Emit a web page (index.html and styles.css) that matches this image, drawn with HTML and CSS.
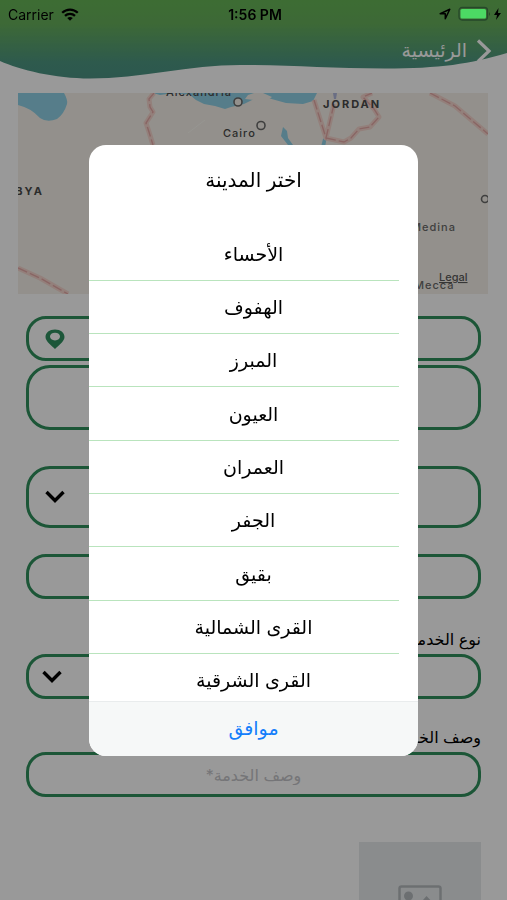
FILE: index.html
```html
<!DOCTYPE html>
<html lang="ar" dir="rtl">
<head>
<meta charset="utf-8">
<meta name="viewport" content="width=device-width, initial-scale=1">
<title>اختر المدينة</title>
<link rel="stylesheet" href="styles.css">
</head>
<body>
<div class="status" dir="ltr">
  <div class="status-side">
    <span>Carrier</span>
    <svg class="wifi" viewBox="0 0 18 13" width="18" height="13" aria-hidden="true">
      <g fill="none" stroke="#000" stroke-width="2.3"><path d="M1.2 4.8C5.6.5 12.4.5 16.800 4.800"/><path d="M4 7.900C6.800 5.200 11.200 5.200 14 7.900"/></g>
      <path d="M9 12.800L6.200 10Q9 7.800 11.800 10Z"/>
    </svg>
  </div>
  <span class="time">1:56 PM</span>
  <div class="status-side status-end">
    <svg viewBox="0 0 12 12" width="12" height="12" aria-hidden="true"><path d="M1.200 5.700L10.800 1.200L6.300 10.800V5.700Z" fill="none" stroke="#000" stroke-width="1.500" stroke-linejoin="round"/></svg>
    <svg viewBox="0 0 44 16" width="44" height="16" aria-hidden="true">
      <rect x="1" y="1.500" width="28.500" height="12.500" rx="3" fill="none" stroke="#26472a" stroke-width="1.300"/>
      <rect x="2.500" y="3" width="25.500" height="9.500" rx="1.500" fill="#4cd964"/>
      <path d="M31 6Q33 8 31 10Z" fill="#26472a"/>
      <path d="M40.500 2L36 9H39L38 14L43 7H40Z"/>
    </svg>
  </div>
</div>

<div class="app">
  <header class="top">
    <svg class="wave" viewBox="0 0 507 80" preserveAspectRatio="none" aria-hidden="true">
      <defs><linearGradient id="g" x1="0" y1="0" x2="0" y2="1"><stop offset="0" stop-color="#67b556"/><stop offset=".3" stop-color="#66af5b"/><stop offset=".8" stop-color="#4d9681"/><stop offset="1" stop-color="#4b9283"/></linearGradient></defs>
      <path fill="url(#g)" d="M0 0H507V53C470 64 440 68.500 385 68.500C330 68.500 290 65 240 65C190 65 140 78.500 90 78.500C55 78.500 20 70 0 61Z"/>
    </svg>
    <a class="back" href="#">
      <svg viewBox="0 0 16 24" width="16" height="24" aria-hidden="true"><path d="M2 1.500L13 12L2 22.500" fill="none" stroke="#fff" stroke-width="3.200"/></svg>
      <span>الرئيسية</span>
    </a>
  </header>

  <svg class="map" viewBox="18 93 470 201" preserveAspectRatio="xMidYMid slice" direction="ltr" role="img" aria-label="Map">
    <rect x="18" y="93" width="470" height="201" fill="#f5f1e9"/>
    <g fill="#8fd0e6">
      <path d="M18 93H64Q68 100 67 104Q64 114 57 119Q47 123 40 118Q31 108 18 105Z"/>
      <path d="M153 93H317L313 101L303 104L286 103L268 98L254 99L244 104L231 107L225 109L215 106L204 104L196 100L190 95L175 93L160 95Z"/>
      <path d="M283 127L287 131L288 138L293 145H288L281 136Z"/>
      <path d="M323 139L327 136L325 147H321Z"/>
      <path d="M333 93H337L336 99H334Z" fill="#b1b8dd"/>
    </g>
    <path d="M245 99L248 95L254 93H263L272 97L268 100L254 100Z" fill="#f5f1e9"/>
    <path d="M188 133L205 120" stroke="#fbf9f3" stroke-width="1"/>
    <path fill="none" stroke="#f6d5ce" stroke-width="5" stroke-linejoin="round" d="M154 93L149 99L150 107L153 112L146 123L149 132L153 145M314 100L326 138L334 104M326 138L344 142L351 138L359 129L370 127L379 117L374 109L363 97L372 93M430 93L455 106L488 134M18 268L40 278L68 294"/>
    <path fill="none" stroke="#e5a9a6" stroke-width="1.400" stroke-dasharray="10 3" d="M154 93L149 99L150 107L153 112L146 123L149 132L153 145M314 100L326 138L334 104M326 138L344 142L351 138L359 129L370 127L379 117L374 109L363 97L372 93M430 93L455 106L488 134M18 268L40 278L68 294"/>
    <g fill="#f5f1e9" stroke="#6a6a6a" stroke-width="1.600"><circle cx="238" cy="102" r="4"/><circle cx="261" cy="125.500" r="4"/><circle cx="485" cy="199" r="3.500"/></g>
    <g class="places">
      <text x="166" y="96">Alexandria</text>
      <text x="223" y="137">Cairo</text>
      <text x="323" y="108" class="country">JORDAN</text>
      <text x="2" y="195" class="country">LIBYA</text>
      <text x="411" y="231" class="light">Medina</text>
      <text x="414" y="289" class="light">Mecca</text>
      <text x="439" y="281" class="legal">Legal</text>
    </g>
  </svg>

  <form class="form">
    <div class="field">
      <input type="text" aria-label="الموقع">
      <svg class="icon" viewBox="0 0 20 20" width="20" height="20" aria-hidden="true"><path fill="#2f8f60" fill-rule="evenodd" d="M10 .5C4.500.5.5 3.500.5 8C.5 12.500 7 17 10 20C13 17 19.500 12.500 19.500 8C19.500 3.500 15.500.5 10 .5ZM10 3.800C13 3.800 15 5.500 15 7.600S13 11.400 10 11.400S5 9.700 5 7.600S7 3.800 10 3.800Z"/></svg>
    </div>
    <textarea class="address" aria-label="العنوان"></textarea>
    <div class="field tall">
      <select aria-label="المدينة"><option></option></select>
      <svg class="icon" viewBox="0 0 20 14" width="20" height="14" aria-hidden="true"><path d="M1.500 2L10 10.500L18.500 2" fill="none" stroke="#000" stroke-width="3.400"/></svg>
    </div>
    <div class="field single"><input type="text" aria-label="الحي"></div>
    <label for="kind">نوع الخدمة</label>
    <div class="field">
      <select id="kind"><option></option></select>
      <svg class="icon near" viewBox="0 0 20 14" width="20" height="14" aria-hidden="true"><path d="M1.500 2L10 10.500L18.500 2" fill="none" stroke="#000" stroke-width="3.400"/></svg>
    </div>
    <label for="desc">وصف الخدمة</label>
    <div class="field"><input id="desc" type="text" placeholder="وصف الخدمة*"></div>
    <button type="button" class="photo" aria-label="صورة">
      <svg viewBox="0 0 44 36" width="44" height="36" aria-hidden="true"><rect x="1.500" y="1.500" width="41" height="33" rx="2" fill="none" stroke="#b5babd" stroke-width="2.500"/><circle cx="10.500" cy="11" r="4.500" fill="#b5babd"/><path d="M5 31V26L13 19L18 23L28.500 11L39 22V31Z" fill="#b5babd"/></svg>
    </button>
  </form>
</div>

<div class="overlay">
  <section class="dialog" role="dialog" aria-labelledby="title">
    <h1 id="title">اختر المدينة</h1>
    <div class="scroll">
      <ul>
        <li><button>الأحساء</button></li>
        <li><button>الهفوف</button></li>
        <li><button>المبرز</button></li>
        <li><button>العيون</button></li>
        <li><button>العمران</button></li>
        <li><button>الجفر</button></li>
        <li><button>بقيق</button></li>
        <li><button>القرى الشمالية</button></li>
        <li><button>القرى الشرقية</button></li>
      </ul>
    </div>
    <button class="ok">موافق</button>
  </section>
</div>
</body>
</html>
```
FILE: styles.css
```css
* { box-sizing: border-box; }

body {
  margin: 0;
  height: 100vh;
  overflow: hidden;
  background: #fff;
  color: #000;
  font-family: Inter, "DejaVu Sans", sans-serif;
}

button, input, select, textarea { font: inherit; color: inherit; }
button { cursor: pointer; }

/* Status bar stays undimmed above the overlay */
.status {
  position: fixed;
  z-index: 3;
  top: 0;
  left: 0;
  right: 0;
  height: 28px;
  padding: 0 5px 0 8px;
  display: flex;
  align-items: center;
  font-size: 14px;
}
.status-side { flex: 1; display: flex; align-items: center; gap: 7px; }
.status-end { justify-content: flex-end; }
.time { font-weight: 600; }

.app { display: flex; flex-direction: column; height: 100vh; overflow: hidden; }

.top {
  display: grid;
  flex: none;
  height: 80px;
  margin-bottom: 13px;
}
.wave, .back { grid-area: 1 / 1; }
.wave { width: 100%; height: 80px; }
.back {
  justify-self: start;
  align-self: start;
  display: flex;
  align-items: center;
  gap: 9px;
  margin: 39px 15px 0;
  color: #fff;
  font-size: 19px;
  line-height: 24px;
  text-decoration: none;
}

.map { display: block; flex: none; height: 201px; margin: 0 19px 0 18px; }
.places { font-size: 11px; font-weight: 500; fill: #4a4a4a; letter-spacing: 1px; }
.country { font-weight: 700; letter-spacing: 2px; }
.light { fill: #6a6a6a; }
.legal { fill: #5a5a5a; letter-spacing: 0; text-decoration: underline; }

.form {
  display: flex;
  flex-direction: column;
  flex: none;
  margin: 22px 26px 0;
}
.field { display: grid; height: 45px; flex: none; }
.field.tall { height: 62px; margin: 36px 0 26px; }
.field > * { grid-area: 1 / 1; }
.field input, .field select, .address {
  width: 100%;
  margin: 0;
  padding: 0 20px;
  border: 3px solid #2f8f5c;
  border-radius: 20px;
  background: none;
  appearance: none;
  outline: 0;
  text-align: center;
  font-size: 16px;
}
.address { height: 65px; margin-top: 4px; border-radius: 24px; resize: none; }
.field.tall select { border-radius: 24px; }
.field input::placeholder { color: #c4c4c8; opacity: 1; }
.icon { justify-self: end; align-self: center; margin-left: 19px; pointer-events: none; }
.icon.near { margin-left: 16px; }
label { margin-bottom: 3px; font-size: 16px; line-height: 24px; }
.single { margin-bottom: 28px; }
.field + label[for="desc"] { margin-top: 26px; }
.photo {
  display: flex;
  justify-content: center;
  align-items: center;
  width: 122px;
  height: 122px;
  margin-top: 45px;
  border: 0;
  background: #e6eaec;
}

.overlay {
  position: fixed;
  z-index: 2;
  inset: 0;
  display: flex;
  align-items: center;
  justify-content: center;
  background: rgba(0, 0, 0, .4);
}
.dialog {
  width: 65%;
  display: flex;
  flex-direction: column;
  overflow: hidden;
  border-radius: 17px;
  background: #fff;
  font-size: 19px;
  text-align: center;
}
h1 {
  height: 83px;
  margin: 0;
  padding-top: 21px;
  font-size: 20px;
  font-weight: 400;
  line-height: 28px;
}
.scroll { height: 473px; overflow: hidden; }
ul {
  display: grid;
  grid-auto-rows: 1fr;
  height: 480px;
  margin: 0;
  padding: 0;
  list-style: none;
}
li { display: grid; background: linear-gradient(#b9e4bd, #b9e4bd) 0 100% / calc(100% - 19px) 1px no-repeat; }
li button, .ok { border: 0; background: none; padding: 0; }
.ok {
  height: 55px;
  border-top: 1px solid #e9eced;
  background: #f6f8f8;
  color: #147efb;
}
```
